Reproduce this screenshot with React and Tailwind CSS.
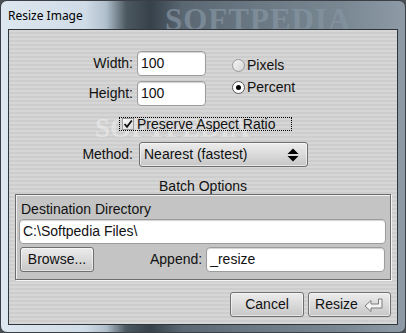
import React from 'react';

// Vista-style "Resize Image" dialog
const ui = { fontFamily: '"Liberation Sans", Arial, sans-serif' };

const Field = ({ value, className = '' }) => (
    <div className={`h-[25px] bg-white border border-[#9c9c9c] rounded-[4px] shadow-[inset_0_1px_1px_rgba(0,0,0,0.18)] flex items-center pl-[3px] text-[14px] text-[#111] ${className}`}>
        {value}
    </div>
);

const Button = ({ children, className = '', align = 'justify-center' }) => (
    <div className={`h-[25px] rounded-[3px] border border-[#707070] bg-gradient-to-b from-[#ececec] via-[#dadada] to-[#c6c6c6] shadow-[inset_0_0_0_1px_rgba(255,255,255,0.55)] flex items-center ${align} text-[14px] text-[#111] ${className}`}>
        {children}
    </div>
);

const Radio = ({ checked, label }) => (
    <div className="h-[22px] flex items-center">
        <div className={`w-[13px] h-[13px] rounded-full border flex items-center justify-center ${checked ? 'border-[#555] bg-white' : 'border-[#9a9a9a] bg-gradient-to-br from-[#f6f6f6] to-[#d4d4d4]'}`}>
            {checked && <div className="w-[5px] h-[5px] rounded-full bg-black" />}
        </div>
        <span className="ml-[2px] text-[14px] text-[#111]">{label}</span>
    </div>
);

const EnterIcon = () => (
    <svg width="20" height="14" viewBox="0 0 20 14" className="ml-[6px]">
        <polygon points="1,8 7,2.5 7,6 14.5,6 14.5,1 18,1 18,10 7,10 7,13.5" fill="#f4f4f4" stroke="#7c7c7c" strokeWidth="1" />
    </svg>
);

export default function App() {
    return (
        <div className="w-[406px] h-[333px] bg-[#4a4f54] overflow-hidden" style={ui}>
            <div className="w-[406px] h-[333px] rounded-[7px] border border-[#3a4046] bg-[linear-gradient(90deg,#dde7f0_0%,#cfdbe6_21%,#b0bfcc_26%,#4c5860_31%,#36414a_37%,#5b6873_45%,#6a7883_62%,#7a8893_85%,#8e9ba6_100%)] flex flex-col relative overflow-hidden">
                {/* title bar */}
                <div className="h-[28px] relative shrink-0">
                    <span className="absolute left-[7px] top-[6px] text-[12px] text-black" style={{ fontFamily: '"Noto Sans", "Open Sans", sans-serif' }}>Resize Image</span>
                    <span className="absolute left-[164px] top-[-4px] text-[31px] font-bold tracking-[1px] text-[#8595a2] opacity-70" style={{ fontFamily: '"Liberation Serif", serif' }}>SOFTPEDIA</span>
                </div>

                {/* client area */}
                <div className="mx-[7px] h-[296px] border border-[#2e353b] bg-[repeating-linear-gradient(180deg,#d6d6d6_0px,#d6d6d6_2px,#cdcdcd_2px,#cdcdcd_4px)] flex flex-col relative">
                    <span className="absolute left-[86px] top-[78px] text-[27px] font-bold text-white/35 pointer-events-none" style={{ fontFamily: '"Liberation Serif", serif' }}>SOFTPEDIA</span>

                    {/* width / height + units */}
                    <div className="flex items-start mt-[21px]">
                        <div className="grid grid-cols-[124px_69px] gap-x-[4px] gap-y-[5px] items-center">
                            <span className="text-right text-[14px] text-[#111]">Width:</span>
                            <Field value="100" />
                            <span className="text-right text-[14px] text-[#111]">Height:</span>
                            <Field value="100" />
                        </div>
                        <div className="ml-[26px] pt-[3px] flex flex-col">
                            <Radio label="Pixels" />
                            <Radio label="Percent" checked />
                        </div>
                    </div>

                    {/* aspect ratio */}
                    <div className="mt-[11px] ml-[110px] w-[173px] h-[14px] border border-dotted border-black flex items-center relative z-10">
                        <div className="ml-[2px] w-[12px] h-[12px] border border-[#9a9a9a] bg-gradient-to-br from-[#fafafa] to-[#dcdcdc] flex items-center justify-center">
                            <svg width="10" height="10" viewBox="0 0 10 10">
                                <path d="M1.5 5 L4 7.8 L8.8 1.5" fill="none" stroke="#111" strokeWidth="1.8" />
                            </svg>
                        </div>
                        <span className="ml-[3px] text-[14px] leading-[14px] text-[#111]">Preserve Aspect Ratio</span>
                    </div>

                    {/* method */}
                    <div className="mt-[11px] flex items-center">
                        <span className="w-[124px] text-right text-[14px] text-[#111]">Method:</span>
                        <Button align="justify-between" className="ml-[6px] w-[169px] pl-[4px] pr-[8px]">
                            <span>Nearest (fastest)</span>
                            <svg width="12" height="14" viewBox="0 0 12 14">
                                <polygon points="6,0.5 11.5,6 0.5,6" fill="#000" />
                                <polygon points="0.5,8 11.5,8 6,13.5" fill="#000" />
                            </svg>
                        </Button>
                    </div>

                    <div className="mt-[11px] h-[16px] leading-[16px] text-center text-[14px] text-[#111]">Batch Options</div>

                    {/* batch group */}
                    <div className="mx-[6px] h-[86px] border border-[#6c6c6c] shadow-[1px_1px_0_#f6f6f6,inset_1px_1px_0_#f0f0f0] bg-[#c4c4c4] flex flex-col">
                        <span className="ml-[5px] mt-[6px] text-[14px] leading-[16px] text-[#111]">Destination Directory</span>
                        <Field value="C:\Softpedia Files\" className="mt-[2px] ml-[3px] mr-[4px]" />
                        <div className="mt-[3px] flex items-center">
                            <Button className="ml-[4px] w-[74px]">Browse...</Button>
                            <span className="ml-[56px] text-[14px] text-[#111]">Append:</span>
                            <Field value="_resize" className="ml-[4px] w-[179px]" />
                        </div>
                    </div>

                    {/* dialog buttons */}
                    <div className="mt-[12px] flex justify-end mr-[6px] gap-[4px]">
                        <Button className="w-[74px]">Cancel</Button>
                        <Button className="w-[83px]">
                            Resize
                            <EnterIcon />
                        </Button>
                    </div>
                </div>
            </div>
        </div>
    );
}
